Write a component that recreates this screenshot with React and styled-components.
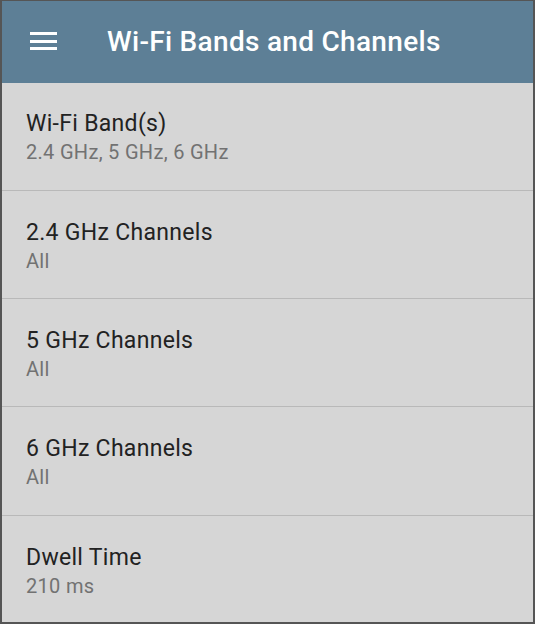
import React from 'react';
import styled, { createGlobalStyle } from 'styled-components';

const GlobalStyle = createGlobalStyle`
  html, body {
    margin: 0;
    padding: 0;
    background: #555;
  }
  body {
    font-family: Roboto, "Noto Sans", sans-serif;
  }
`;

const Frame = styled.div`
  box-sizing: border-box;
  width: 535px;
  height: 624px;
  border: 2px solid #555555;
  border-top-width: 1px;
  background: #d6d6d6;
  display: flex;
  flex-direction: column;
  overflow: hidden;
`;

const Toolbar = styled.header`
  height: 82px;
  flex-shrink: 0;
  background: #5d7f96;
  display: flex;
  align-items: center;
  padding-left: 28px;
`;

const MenuButton = styled.button`
  border: 0;
  background: none;
  padding: 0;
  width: 27px;
  height: 18px;
  margin-bottom: 2px;
  display: flex;
  flex-direction: column;
  justify-content: space-between;
  cursor: pointer;

  span {
    display: block;
    height: 3px;
    background: #ffffff;
  }
`;

const Title = styled.h1`
  margin: 0 0 2px 50px;
  color: #ffffff;
  font-size: 28px;
  font-weight: 500;
  letter-spacing: 0.3px;
`;

const List = styled.ul`
  list-style: none;
  margin: 0;
  padding: 0;
`;

const Item = styled.li`
  box-sizing: border-box;
  height: ${p => (p.$last ? 'auto' : '108.4px')};
  padding: 28px 24px 0 24px;
  border-bottom: ${p => (p.$last ? 'none' : '1px solid #b9b9b9')};

  &:first-child {
    height: 107.6px;
    padding-top: 27px;
  }
`;

const Label = styled.div`
  color: #222222;
  font-size: 23px;
  line-height: 28px;
  letter-spacing: 0.3px;
`;

const Value = styled.div`
  margin-top: 2px;
  color: #727272;
  font-size: 20px;
  line-height: 24px;
  letter-spacing: 0.3px;
`;

const settings = [
  { label: 'Wi-Fi Band(s)', value: '2.4 GHz, 5 GHz, 6 GHz' },
  { label: '2.4 GHz Channels', value: 'All' },
  { label: '5 GHz Channels', value: 'All' },
  { label: '6 GHz Channels', value: 'All' },
  { label: 'Dwell Time', value: '210 ms' },
];

export default function App() {
  return (
    <>
      <GlobalStyle />
      <Frame>
        <Toolbar>
          <MenuButton aria-label="Menu">
            <span />
            <span />
            <span />
          </MenuButton>
          <Title>Wi-Fi Bands and Channels</Title>
        </Toolbar>
        <List>
          {settings.map((s, i) => (
            <Item key={s.label} $last={i === settings.length - 1}>
              <Label>{s.label}</Label>
              <Value>{s.value}</Value>
            </Item>
          ))}
        </List>
      </Frame>
    </>
  );
}
